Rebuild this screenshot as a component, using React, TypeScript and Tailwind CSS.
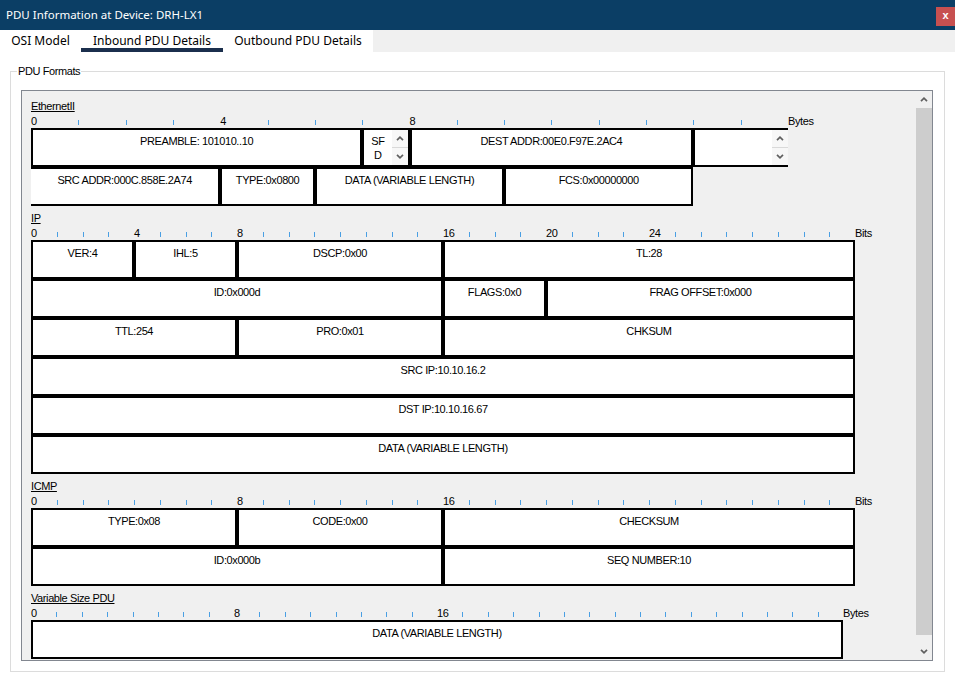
import React from "react";

type Cell = {
  text?: string;
  lines?: string[];
  units: number;
  edge?: "noLeft" | "noRight";
  spinner?: boolean;
};

type Section = {
  title: string;
  unit: number;
  total: number;
  marks: number[];
  suffix: string;
  rows: Cell[][];
};

const sections: Section[] = [
  {
    title: "EthernetII",
    unit: 757 / 16,
    total: 16,
    marks: [0, 4, 8],
    suffix: "Bytes",
    rows: [
      [
        { text: "PREAMBLE: 101010..10", units: 7 },
        { lines: ["SF", "D"], units: 1, spinner: true },
        { text: "DEST ADDR:00E0.F97E.2AC4", units: 6 },
        { units: 2, edge: "noRight", spinner: true },
      ],
      [
        { text: "SRC ADDR:000C.858E.2A74", units: 4, edge: "noLeft" },
        { text: "TYPE:0x0800", units: 2 },
        { text: "DATA (VARIABLE LENGTH)", units: 4 },
        { text: "FCS:0x00000000", units: 4 },
      ],
    ],
  },
  {
    title: "IP",
    unit: 824 / 32,
    total: 32,
    marks: [0, 4, 8, 16, 20, 24],
    suffix: "Bits",
    rows: [
      [
        { text: "VER:4", units: 4 },
        { text: "IHL:5", units: 4 },
        { text: "DSCP:0x00", units: 8 },
        { text: "TL:28", units: 16 },
      ],
      [
        { text: "ID:0x000d", units: 16 },
        { text: "FLAGS:0x0", units: 4 },
        { text: "FRAG OFFSET:0x000", units: 12 },
      ],
      [
        { text: "TTL:254", units: 8 },
        { text: "PRO:0x01", units: 8 },
        { text: "CHKSUM", units: 16 },
      ],
      [{ text: "SRC IP:10.10.16.2", units: 32 }],
      [{ text: "DST IP:10.10.16.67", units: 32 }],
      [{ text: "DATA (VARIABLE LENGTH)", units: 32 }],
    ],
  },
  {
    title: "ICMP",
    unit: 824 / 32,
    total: 32,
    marks: [0, 8, 16],
    suffix: "Bits",
    rows: [
      [
        { text: "TYPE:0x08", units: 8 },
        { text: "CODE:0x00", units: 8 },
        { text: "CHECKSUM", units: 16 },
      ],
      [
        { text: "ID:0x000b", units: 16 },
        { text: "SEQ NUMBER:10", units: 16 },
      ],
    ],
  },
  {
    title: "Variable Size PDU",
    unit: 812 / 32,
    total: 32,
    marks: [0, 8, 16],
    suffix: "Bytes",
    rows: [[{ text: "DATA (VARIABLE LENGTH)", units: 32 }]],
  },
];

function Chevron({ up }: { up?: boolean }) {
  return (
    <svg width="8" height="5" viewBox="0 0 8 5" className="block">
      <polyline
        points={up ? "1,4.2 4,1.2 7,4.2" : "1,0.8 4,3.8 7,0.8"}
        fill="none"
        stroke="#5f5f5f"
        strokeWidth="1.7"
      />
    </svg>
  );
}

function Spinner() {
  return (
    <div className="flex h-full w-[16px] shrink-0 flex-col bg-[#f7f7f7]">
      <div className="flex flex-1 items-center justify-center">
        <Chevron up />
      </div>
      <div className="h-px bg-[#d9d9d9]" />
      <div className="flex flex-1 items-center justify-center">
        <Chevron />
      </div>
    </div>
  );
}

function PduCell({ cell, unit }: { cell: Cell; unit: number }) {
  const borders =
    cell.edge === "noLeft"
      ? "border-y-2 border-r-2"
      : cell.edge === "noRight"
        ? "border-y-2 border-l-2"
        : "border-2";
  return (
    <div
      style={{ width: cell.units * unit }}
      className={`flex h-[39px] shrink-0 border-black bg-white ${borders}`}
    >
      <div className="flex-1 pt-[4px] text-center leading-[14px]">
        {cell.lines ? cell.lines.map((l) => <div key={l}>{l}</div>) : cell.text}
      </div>
      {cell.spinner && <Spinner />}
    </div>
  );
}

function Ruler({ s }: { s: Section }) {
  return (
    <div className="flex h-[14px] items-end pb-[1px]">
      {Array.from({ length: s.total }, (_, k) => (
        <div key={k} style={{ width: s.unit }} className="flex shrink-0 items-end">
          {s.marks.includes(k) ? (
            <span className="leading-none">{k}</span>
          ) : (
            <span className="mb-[2px] h-[5px] w-px bg-[#4a9fe3]" />
          )}
        </div>
      ))}
      <span className="leading-none">{s.suffix}</span>
    </div>
  );
}

function PduSection({ s }: { s: Section }) {
  return (
    <div className="mb-[6px]">
      <div className="h-[14px] leading-[12px]">
        <span className="underline underline-offset-[1px]">{s.title}</span>
      </div>
      <Ruler s={s} />
      {s.rows.map((row, i) => (
        <div key={i} className="flex">
          {row.map((c, j) => (
            <PduCell key={j} cell={c} unit={s.unit} />
          ))}
        </div>
      ))}
    </div>
  );
}

export default function App() {
  return (
    <div className="h-[683px] w-[955px] overflow-hidden bg-white font-['Noto_Sans',sans-serif] text-black">
      {/* title bar */}
      <div className="flex h-[30px] items-start justify-between bg-[#0b3e65]">
        <div className="flex h-[30px] items-center pl-[6px] text-[11.5px] leading-[16px] text-white">
          PDU Information at Device: DRH-LX1
        </div>
        <div className="mt-[7px] flex h-[19px] w-[19px] items-center justify-center bg-[#c75050] pb-[2px] font-['Liberation_Sans',sans-serif] text-[11px] font-bold text-white">
          x
        </div>
      </div>

      {/* tabs */}
      <div className="flex h-[22px] bg-[#f0f0f0] text-[12px] leading-[16px]">
        <div className="h-[22px] w-[81px] bg-white pt-[3px] text-center">OSI Model</div>
        <div className="h-[22px] w-[142px] bg-white pt-[3px] text-center shadow-[inset_0_-4px_0_#1b2f4d]">
          Inbound PDU Details
        </div>
        <div className="h-[22px] w-[150px] bg-white pt-[3px] text-center">Outbound PDU Details</div>
      </div>

      {/* group box */}
      <fieldset className="ml-[10px] mt-[12px] w-[935px] border border-[#dcdcdc] pb-[10px] pl-[10px] pr-[11px] font-['Liberation_Sans',Arial,sans-serif] text-[11px] tracking-[-0.4px]">
        <legend className="-ml-[4px] px-[1px] leading-[14px]">PDU Formats</legend>
        <div className="mt-[12px] flex h-[571px] w-[912px] overflow-hidden border border-[#828790] bg-[#f0f0f0]">
          <div className="flex-1 pl-[9px] pt-[9px]">
            {sections.map((s) => (
              <PduSection key={s.title} s={s} />
            ))}
          </div>
          <div className="flex w-[17px] shrink-0 flex-col">
            <div className="flex h-[17px] items-center justify-center">
              <Chevron up />
            </div>
            <div className="h-[527px] pl-px">
              <div className="h-full bg-[#cdcdcd]" />
            </div>
            <div className="flex-1" />
            <div className="flex h-[17px] items-center justify-center">
              <Chevron />
            </div>
          </div>
        </div>
      </fieldset>
    </div>
  );
}
